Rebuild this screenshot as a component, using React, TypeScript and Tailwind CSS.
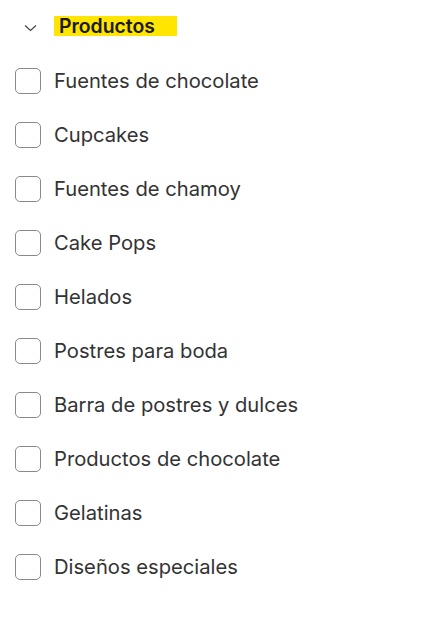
const ITEMS = [
  "Fuentes de chocolate",
  "Cupcakes",
  "Fuentes de chamoy",
  "Cake Pops",
  "Helados",
  "Postres para boda",
  "Barra de postres y dulces",
  "Productos de chocolate",
  "Gelatinas",
  "Diseños especiales",
];

export default function App() {
  return (
    <div className="h-[618px] w-[442px] bg-white font-['Inter',sans-serif] text-[#333]">
      <div className="flex h-[52px] items-center pl-[24px]">
        <svg width="13" height="8" viewBox="0 0 13 8" fill="none" className="mt-[3px]">
          <path d="M1 1.5l5.5 5 5.5-5" stroke="#444" strokeWidth="1.2" />
        </svg>
        <span className="ml-[17px] bg-[#ffe500] pl-[5px] pr-[22px] text-[19.4px] leading-[20px] font-semibold text-[#1a1a1a]">
          Productos
        </span>
      </div>
      <ul className="pt-[2px]">
        {ITEMS.map((label) => (
          <li key={label} className="flex h-[54px] items-center pl-[15px]">
            <span className="h-[26px] w-[26px] shrink-0 rounded-[5px] border border-[#8a8a8a]" />
            <span className="ml-[13px] text-[20.2px] leading-none">{label}</span>
          </li>
        ))}
      </ul>
    </div>
  );
}
